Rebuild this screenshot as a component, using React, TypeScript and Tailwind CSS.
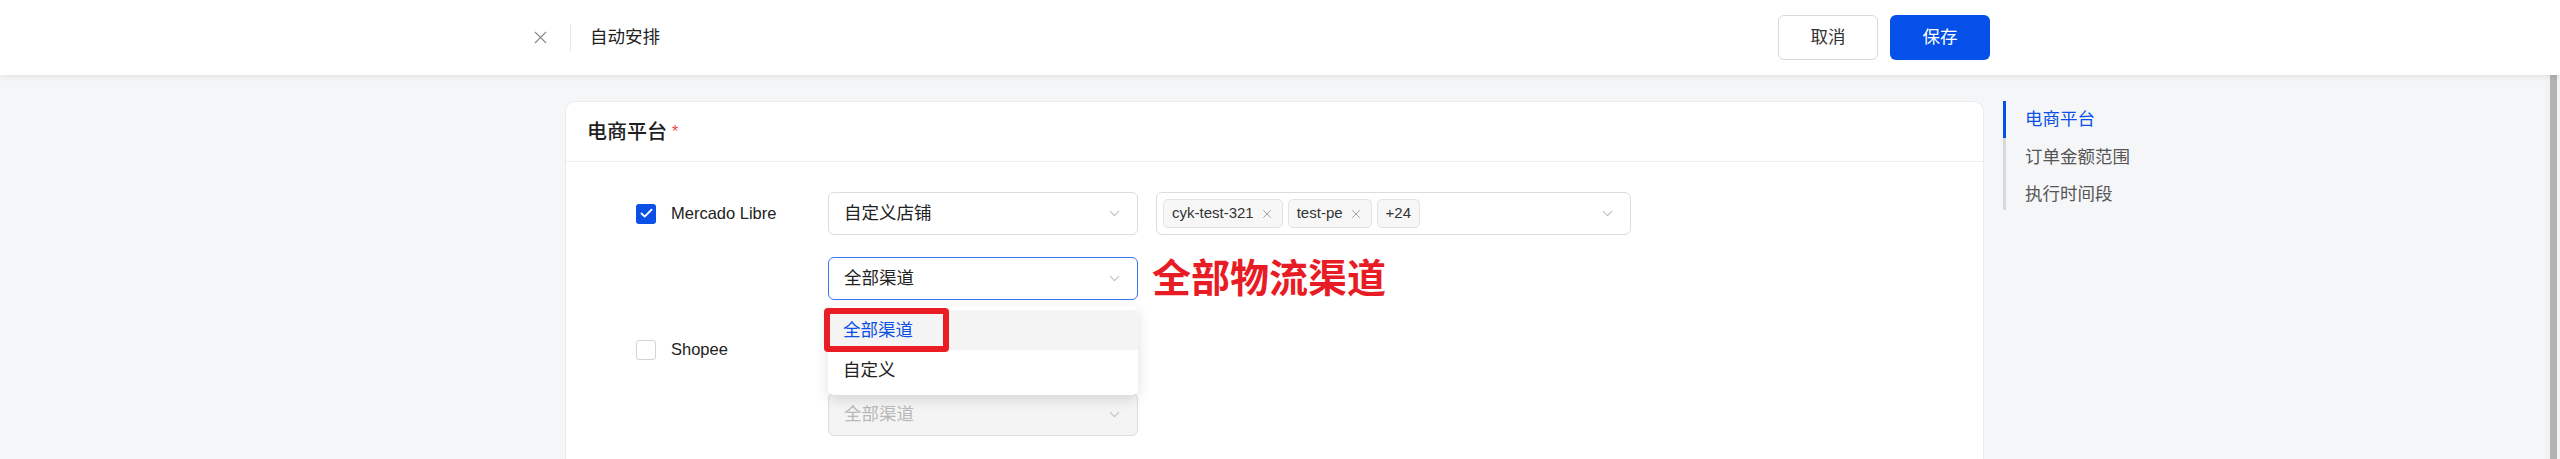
import React from 'react';
import { X, ChevronDown, Check } from 'lucide-react';

const FONT = '"Liberation Sans", "Noto Sans CJK SC", sans-serif';

const Select: React.FC<{ value: string; focused?: boolean; disabled?: boolean }> = ({ value, focused, disabled }) => (
  <div
    className={`w-[310px] h-[43px] flex items-center justify-between pl-[15px] pr-[14px] rounded-[6px] border text-[17.5px] ${
      focused ? 'border-[#3a74f5] bg-white text-[#222]' : disabled ? 'border-[#dcdcdc] bg-[#f4f4f4] text-[#b8b8b8]' : 'border-[#dcdcdc] bg-white text-[#222]'
    }`}
  >
    <span>{value}</span>
    <ChevronDown size={17} strokeWidth={1.5} className="text-[#bdbdbd]" />
  </div>
);

const Tag: React.FC<{ label: string; closable?: boolean }> = ({ label, closable = true }) => (
  <span className="h-[29px] flex items-center gap-[6px] px-[8px] rounded-[5px] border border-[#e3e3e3] bg-[#f7f7f7] text-[15px] text-[#333]">
    {label}
    {closable && <X size={14} strokeWidth={1.5} className="text-[#999]" />}
  </span>
);

const Checkbox: React.FC<{ checked?: boolean }> = ({ checked }) =>
  checked ? (
    <span className="w-[20px] h-[20px] rounded-[3px] bg-[#0a50e6] flex items-center justify-center">
      <Check size={15} strokeWidth={3} className="text-white" />
    </span>
  ) : (
    <span className="w-[20px] h-[20px] rounded-[3px] border border-[#d4d4d4] bg-white" />
  );

export default function App() {
  return (
    <div className="w-[2560px] h-[459px] overflow-hidden bg-[#f5f6f8] relative" style={{ fontFamily: FONT }}>
      {/* top bar */}
      <header className="h-[75px] bg-white flex items-center justify-between pl-[530px] pr-[570px] shadow-[0_2px_6px_rgba(0,0,0,0.08)] relative z-10">
        <div className="flex items-center">
          <X size={21} strokeWidth={1.3} className="text-[#8a8a8a]" />
          <div className="w-px h-[27px] bg-[#e8e8e8] ml-[19px] mr-[19px]" />
          <span className="text-[17.5px] text-[#222]">自动安排</span>
        </div>
        <div className="flex items-center gap-[12px]">
          <button className="w-[100px] h-[45px] rounded-[6px] border border-[#d9d9d9] bg-white text-[17.5px] text-[#333]">取消</button>
          <button className="w-[100px] h-[45px] rounded-[6px] bg-[#0550e8] text-[17.5px] text-white">保存</button>
        </div>
      </header>

      <div className="flex pl-[565px] pt-[26px]">
        {/* card */}
        <div className="w-[1419px] h-[400px] bg-white rounded-t-[10px] border border-b-0 border-[#ebebeb]">
          <div className="h-[60px] flex items-center px-[21px] border-b border-[#eeeeee]">
            <span className="text-[20px] font-medium text-[#1f1f1f]">电商平台</span>
            <span className="text-[#f04848] ml-[5px] text-[16px]">*</span>
          </div>

          <div className="pl-[70px] pt-[30px] flex flex-col gap-[28px]">
            {/* Mercado Libre */}
            <div className="flex">
              <div className="w-[192px] h-[43px] flex items-center gap-[15px]">
                <Checkbox checked />
                <span className="text-[16.5px] text-[#222]">Mercado Libre</span>
              </div>
              <div className="flex flex-col gap-[22px]">
                <div className="flex gap-[18px]">
                  <Select value="自定义店铺" />
                  <div className="w-[475px] h-[43px] rounded-[6px] border border-[#dcdcdc] flex items-center justify-between pl-[6px] pr-[14px]">
                    <div className="flex items-center gap-[5px]">
                      <Tag label="cyk-test-321" />
                      <Tag label="test-pe" />
                      <Tag label="+24" closable={false} />
                    </div>
                    <ChevronDown size={17} strokeWidth={1.5} className="text-[#bdbdbd]" />
                  </div>
                </div>
                <div className="flex items-center">
                  <div className="relative">
                    <Select value="全部渠道" focused />
                    {/* dropdown */}
                    <div className="absolute left-0 top-[49px] w-[310px] bg-white rounded-[6px] shadow-[0_4px_14px_rgba(0,0,0,0.13)] py-[4px] z-20 text-[17.5px]">
                      <div className="h-[40px] flex items-center pl-[15px] bg-[#f4f4f4] text-[#0a50e6]">全部渠道</div>
                      <div className="h-[41px] flex items-center pl-[15px] text-[#222]">自定义</div>
                      <div className="absolute left-[-4px] top-[2px] w-[125px] h-[44px] border-[6px] border-[#ea1d25] rounded-[4px]" />
                    </div>
                  </div>
                  <span className="ml-[14px] text-[39px] font-bold text-[#e81c24] leading-none">全部物流渠道</span>
                </div>
              </div>
            </div>

            {/* Shopee */}
            <div className="flex">
              <div className="w-[192px] h-[43px] flex items-center gap-[15px]">
                <Checkbox />
                <span className="text-[16.5px] text-[#222]">Shopee</span>
              </div>
              <div className="flex flex-col gap-[22px]">
                <Select value="全部渠道" disabled />
                <Select value="全部渠道" disabled />
              </div>
            </div>
          </div>
        </div>

        {/* anchor nav */}
        <div className="ml-[19px] flex">
          <div className="w-[3px] h-[109px] bg-[#d9d9d9] flex flex-col">
            <div className="h-[37px] bg-[#0550e8]" />
          </div>
          <div className="pl-[19px] pt-[6px] flex flex-col gap-[13px] text-[17.5px] leading-[24.5px]">
            <span className="text-[#0a50e6]">电商平台</span>
            <span className="text-[#555]">订单金额范围</span>
            <span className="text-[#555]">执行时间段</span>
          </div>
        </div>
      </div>

      {/* page scrollbar */}
      <div className="absolute right-0 top-[75px] bottom-0 w-[15px] bg-[#f3f3f3] flex justify-end">
        <div className="w-[7px] h-full bg-[#b3b3b3] mr-[3px]" />
      </div>
    </div>
  );
}
